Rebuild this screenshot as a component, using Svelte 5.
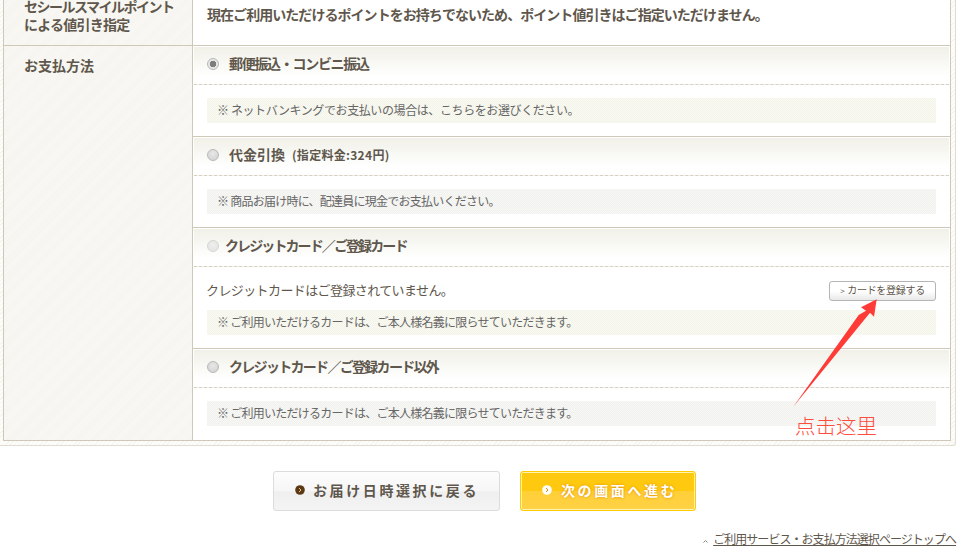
<script>
  const slash = '\uFF0F';
  const options = [
    { label: '郵便振込・コンビニ振込', fit: '', checked: true, note: '※ ネットバンキングでお支払いの場合は、こちらをお選びください。', tint: 'warm loose' },
    { label: '代金引換', fit: 'wide', sub: '(指定料金:324円)', note: '※ 商品お届け時に、配達員に現金でお支払いください。', tint: 'grey' },
    { label: `クレジットカード${slash}ご登録カード`, fit: 'tight', disabled: true, empty: 'クレジットカードはご登録されていません。', note: '※ ご利用いただけるカードは、ご本人様名義に限らせていただきます。', tint: 'warm' },
    { label: `クレジットカード${slash}ご登録カード以外`, fit: 'snug', note: '※ ご利用いただけるカードは、ご本人様名義に限らせていただきます。', tint: 'grey' }
  ];
</script>

<main>
  <div class="panel">
    <div class="table">
      <div class="row first">
        <div class="head"><span class="kana">セシールスマイルポイント</span><span>による値引き指定</span></div>
        <div class="cell"><p class="lead">現在ご利用いただけるポイントをお持ちでないため、ポイント値引きはご指定いただけません。</p></div>
      </div>
      <div class="row">
        <div class="head pay">お支払方法</div>
        <div class="cell">
          {#each options as opt}
            <section class="option">
              <div class="title">
                <span class="radio" class:checked={opt.checked} class:off={opt.disabled}></span>
                <span class="label {opt.fit}">{opt.label}</span>
                {#if opt.sub}<span class="sub">{opt.sub}</span>{/if}
              </div>
              <div class="body">
                {#if opt.empty}
                  <div class="empty">
                    <span>{opt.empty}</span>
                    <button class="small"><i>&gt;</i>カードを登録する</button>
                  </div>
                {/if}
                <div class="note {opt.tint}">{opt.note}</div>
              </div>
            </section>
          {/each}
        </div>
      </div>
    </div>
  </div>

  <div class="actions">
    <button class="big back">
      <svg class="dot" width="10" height="10" viewBox="0 0 10 10">
        <circle cx="5" cy="5" r="4.8" fill="#5a3a14" />
        <path d="M4 3l2 2-2 2" fill="none" stroke="#e9c98a" stroke-width="1" />
      </svg><span>お届け日時選択に戻る</span>
    </button>
    <button class="big next">
      <svg class="dot" width="10" height="10" viewBox="0 0 10 10">
        <circle cx="5" cy="5" r="4.8" fill="#fff" />
        <path d="M4 3l2 2-2 2" fill="none" stroke="#f08a00" stroke-width="1" />
      </svg><span>次の画面へ進む</span>
    </button>
  </div>

  <div class="pagetop">
    <svg class="up" width="5" height="4" viewBox="0 0 5 4"><path d="M0.5 3.5l2-2 2 2" fill="none" stroke="#8a8378" /></svg>
    <a href="#top">ご利用サービス・お支払方法選択ページトップへ</a>
  </div>

  <svg class="arrow" width="100" height="120" viewBox="780 295 100 120">
    <polygon points="793.3,406.7 858.7,315 866,310.7 861,307.3 876.7,299.3 874,316.7 870,312.7" fill="#ff3b38" />
  </svg>
  <div class="callout">点击这里</div>
</main>

<style>
  :global(body) {
    margin: 0;
    background: #fff;
  }

  main {
    position: relative;
    width: 970px;
    height: 555px;
    overflow: hidden;
    font-family: "Noto Sans CJK JP", "Liberation Sans", sans-serif;
    color: #5f574c;
  }

  .panel {
    width: 956px;
    height: 446px;
    box-sizing: border-box;
    padding-left: 3px;
    background: repeating-linear-gradient(135deg, #f7f5f0 0 1px, #fdfdfb 1px 3px);
    border-bottom: 1px solid #e0dcd2;
    border-right: 1px solid #e0dcd2;
    border-radius: 0 0 3px 0;
  }

  .table {
    width: 948px;
    height: 441px;
    box-sizing: border-box;
    display: flex;
    flex-direction: column;
    border: 1px solid #cfc8b8;
    border-top: 0;
    background: #fff;
  }

  .row {
    display: flex;
    flex: 1;
  }

  .first {
    flex: 0 0 46px;
    box-sizing: border-box;
    border-bottom: 1px solid #cfc8b8;
    overflow: hidden;
  }

  .head {
    flex: 0 0 189px;
    box-sizing: border-box;
    padding-left: 20px;
    border-right: 1px solid #cfc8b8;
    background: repeating-linear-gradient(135deg, #f6f4ee 0 1px, #f9f8f4 1px 2px);
    font-size: 14px;
    font-weight: 700;
    line-height: 18px;
  }

  .first .head {
    margin-top: -3px;
    padding-bottom: 3px;
    white-space: nowrap;
    letter-spacing: -0.75px;
  }

  .head span {
    display: block;
  }

  .head .kana {
    letter-spacing: -1.5px;
  }

  .pay {
    padding-top: 10px;
  }

  .cell {
    flex: 1;
    min-width: 0;
    display: flex;
    flex-direction: column;
  }

  .lead {
    margin: 4px 0 0 14px;
    font-size: 14px;
    font-weight: 700;
    line-height: 20px;
    letter-spacing: -0.95px;
    white-space: nowrap;
  }

  .option {
    border-bottom: 1px solid #cfc8b8;
  }

  .option:last-child {
    border-bottom: 0;
  }

  .title {
    height: 34px;
    margin: 1px 1px 0 1px;
    display: flex;
    align-items: center;
    padding: 0 0 3px 13px;
    border-bottom: 1px dashed #d6d0c2;
    background: linear-gradient(#f1f0e8, #fff 80%);
  }

  .radio {
    width: 12px;
    height: 12px;
    border-radius: 50%;
    margin-right: 10px;
    box-sizing: border-box;
    border: 1px solid #b9b9b9;
    background: radial-gradient(circle at 50% 35%, #e8e8e8, #cfcfcf);
  }

  .radio.checked {
    background: radial-gradient(circle, #7d7d7d 0 3px, #e6e6e6 3.5px);
  }

  .radio.off {
    opacity: 0.55;
    margin-right: 6px;
  }

  .label {
    margin-bottom: 2px;
    font-size: 14px;
    font-weight: 700;
    letter-spacing: -1.3px;
    white-space: nowrap;
  }

  .wide {
    letter-spacing: 0;
  }

  .tight {
    letter-spacing: -1.9px;
  }

  .snug {
    letter-spacing: -1.7px;
  }

  .sub {
    margin: 0 0 2px 7px;
    font-size: 12px;
    font-weight: 700;
    letter-spacing: 0.3px;
  }

  .body {
    padding: 13px 14px 13px 14px;
  }

  .empty {
    display: flex;
    align-items: center;
    justify-content: space-between;
    height: 22px;
    margin-bottom: 8px;
    font-size: 13px;
    letter-spacing: -0.6px;
  }

  .empty span {
    margin-bottom: 3px;
    margin-left: -1px;
  }

  .small {
    width: 107px;
    height: 20px;
    padding: 0 0 1px;
    border: 1px solid #b5b5b5;
    border-radius: 3px;
    background: linear-gradient(#fff 50%, #e9e9e9);
    font: 10px/16px "Noto Sans CJK JP", sans-serif;
    letter-spacing: -0.3px;
    color: #5f574c;
  }

  .small i {
    font-style: normal;
    margin-right: 3px;
    font-size: 8px;
  }

  .note {
    height: 25px;
    box-sizing: border-box;
    padding-left: 10px;
    font-size: 12px;
    line-height: 24px;
    letter-spacing: -0.75px;
    color: #666;
    white-space: nowrap;
  }

  .loose {
    letter-spacing: -0.4px;
  }

  .warm {
    background: repeating-conic-gradient(#f3f3e8 0 25%, #fafaf4 0 50%) 0 0 / 2px 2px;
  }

  .grey {
    background: repeating-conic-gradient(#f0f0ed 0 25%, #f8f8f6 0 50%) 0 0 / 2px 2px;
  }

  .actions {
    display: flex;
    gap: 20px;
    padding: 25px 0 0 273px;
  }

  .big {
    height: 40px;
    padding: 0 0 2px 21px;
    box-sizing: border-box;
    border-radius: 3px;
    display: flex;
    align-items: center;
    font-family: inherit;
    font-size: 14px;
    font-weight: 700;
    letter-spacing: 2.6px;
  }

  .back {
    width: 227px;
    border: 1px solid #dcdcdc;
    background: linear-gradient(#fdfdfd, #f6f6f6 50%, #efefef 52%, #f4f4f4);
    color: #5f574c;
  }

  .next {
    width: 176px;
    border: 1px solid #ffcc00;
    box-shadow: inset 0 0 0 1px #fff3b0;
    background: linear-gradient(#ffc90f 50%, #ffcf36 50%, #ffd246);
    color: #fff;
    text-shadow: 0 0 3px #e58a00;
  }

  .dot {
    margin-right: 8px;
  }

  .next .dot {
    margin-right: 9px;
  }

  .pagetop {
    margin-top: 19px;
    padding-right: 14px;
    display: flex;
    justify-content: flex-end;
    align-items: center;
    font-size: 12px;
    letter-spacing: -0.95px;
    line-height: 18px;
  }

  .pagetop a {
    color: inherit;
  }

  .up {
    margin: 4px 5px 0 0;
  }

  .arrow {
    position: absolute;
    left: 780px;
    top: 295px;
  }

  .callout {
    position: absolute;
    left: 795px;
    top: 411px;
    font-family: "Noto Sans CJK SC", sans-serif;
    font-size: 20.5px;
    font-weight: 300;
    line-height: 28px;
    color: #ff4d3d;
  }
</style>
